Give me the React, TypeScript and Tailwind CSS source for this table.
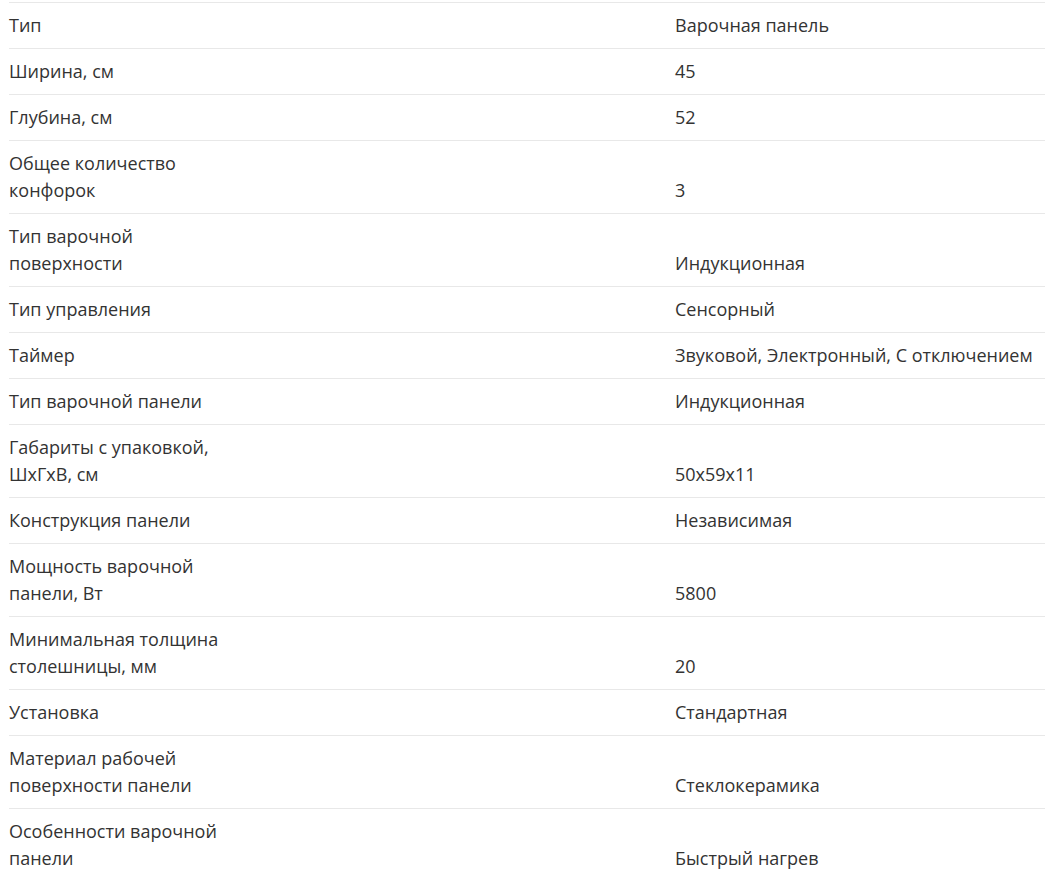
const ROWS: [string, string][] = [
  ['Тип', 'Варочная панель'],
  ['Ширина, см', '45'],
  ['Глубина, см', '52'],
  ['Общее количество конфорок', '3'],
  ['Тип варочной поверхности', 'Индукционная'],
  ['Тип управления', 'Сенсорный'],
  ['Таймер', 'Звуковой, Электронный, С отключением'],
  ['Тип варочной панели', 'Индукционная'],
  ['Габариты с упаковкой, ШxГxВ, см', '50x59x11'],
  ['Конструкция панели', 'Независимая'],
  ['Мощность варочной панели, Вт', '5800'],
  ['Минимальная толщина столешницы, мм', '20'],
  ['Установка', 'Стандартная'],
  ['Материал рабочей поверхности панели', 'Стеклокерамика'],
  ['Особенности варочной панели', 'Быстрый нагрев'],
]

export default function App() {
  return (
    <div className="bg-white min-h-screen pt-[2px] pl-[9px] font-['Open_Sans',sans-serif] text-[18px] leading-[27px] text-[#333]">
      {ROWS.map(([label, value]) => (
        <div key={label} className="grid grid-cols-[666px_1fr] border-t border-[#e8e8e8] py-[9px]">
          <div className="max-w-[232px]">{label}</div>
          <div className="self-end whitespace-nowrap">{value}</div>
        </div>
      ))}
    </div>
  )
}
